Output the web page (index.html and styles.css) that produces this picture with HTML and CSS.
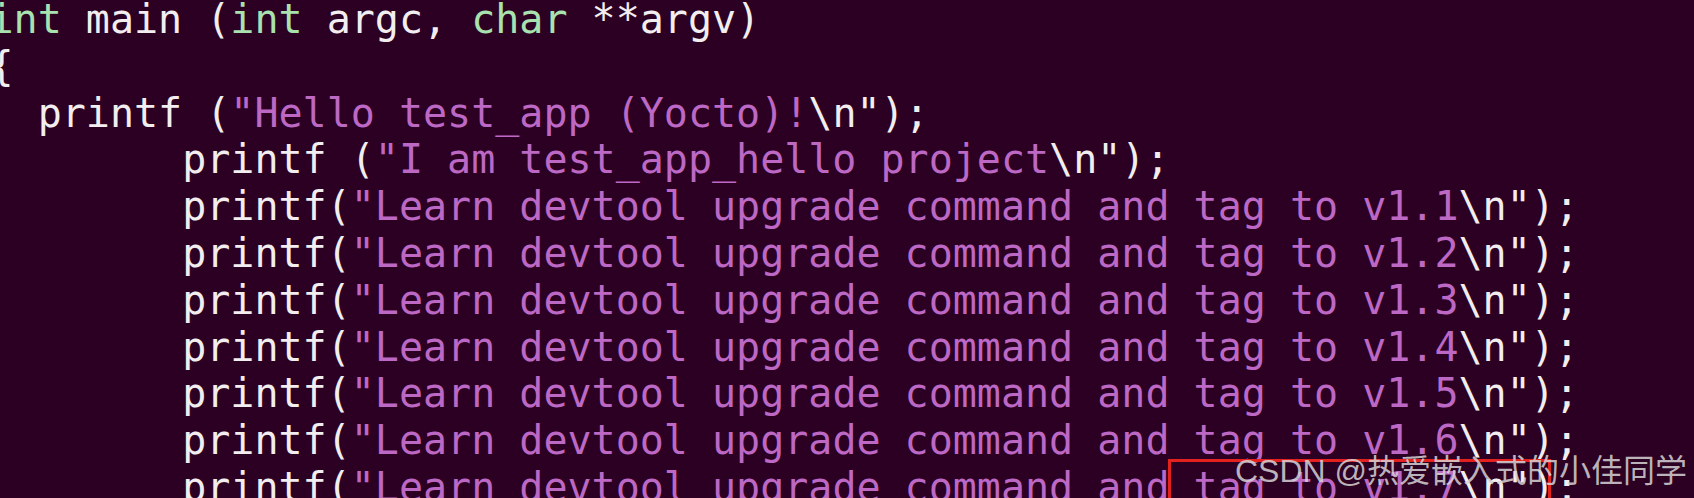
FILE: index.html
```html
<!DOCTYPE html>
<html>
<head>
<meta charset="utf-8">
<link rel="stylesheet" href="styles.css">
</head>
<body>
<div class="term">
<pre class="code"><span class="kw">int</span> main (<span class="kw">int</span> argc, <span class="kw">char</span> **argv)
{
  printf (<span class="str">"Hello test_app (Yocto)!</span>\n");
        printf (<span class="str">"I am test_app_hello project</span>\n");
        printf(<span class="str">"Learn devtool upgrade command and tag to v1.1</span>\n");
        printf(<span class="str">"Learn devtool upgrade command and tag to v1.2</span>\n");
        printf(<span class="str">"Learn devtool upgrade command and tag to v1.3</span>\n");
        printf(<span class="str">"Learn devtool upgrade command and tag to v1.4</span>\n");
        printf(<span class="str">"Learn devtool upgrade command and tag to v1.5</span>\n");
        printf(<span class="str">"Learn devtool upgrade command and tag to v1.6</span>\n");
        printf(<span class="str">"Learn devtool upgrade command and tag to v1.7</span>\n");</pre>
<div class="highlight"></div>
<div class="watermark">CSDN @热爱嵌入式的小佳同学</div>
</div>
</body>
</html>
```
FILE: styles.css
```css
html, body {
  margin: 0;
  padding: 0;
  background: #2c0022;
  overflow: hidden;
}

.term {
  position: relative;
  width: 1694px;
  height: 498px;
  overflow: hidden;
  background: #2c0022;
}

.code {
  margin: -4px 0 0 -10.5px;
  font-family: "DejaVu Sans Mono", monospace;
  font-size: 40px;
  line-height: 46.8px;
  color: #f2eef0;
  white-space: pre;
}

.kw {
  color: #a8e2ae;
}

.str {
  color: #bc68c4;
}

.highlight {
  position: absolute;
  left: 1168px;
  top: 459px;
  width: 377px;
  height: 70px;
  border: 3px solid #e3221f;
}

.watermark {
  position: absolute;
  right: 7px;
  top: 455px;
  font-family: "Liberation Sans", "Noto Sans CJK SC", sans-serif;
  font-size: 32px;
  line-height: 32px;
  color: rgba(215, 212, 214, 0.85);
  white-space: nowrap;
}
```
